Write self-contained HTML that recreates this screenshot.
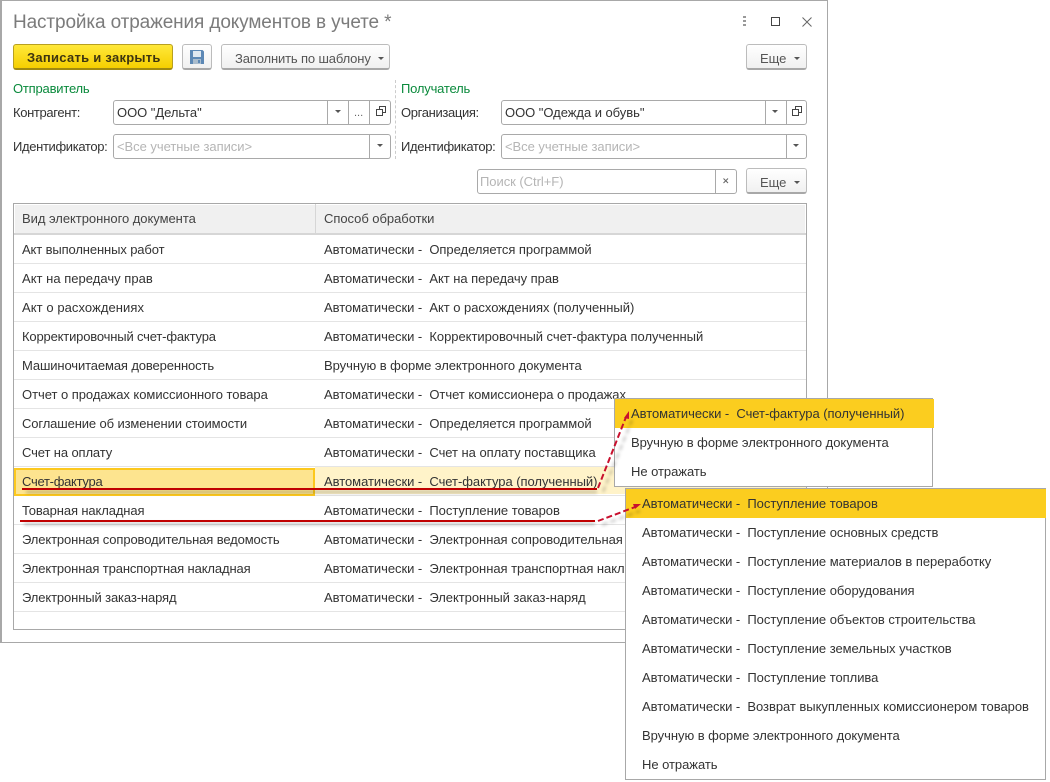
<!DOCTYPE html>
<html lang="ru"><head><meta charset="utf-8"><title>Настройка отражения документов в учете</title>
<style>
html,body{margin:0;padding:0;background:#fff}
body{width:1050px;height:782px;position:relative;overflow:hidden;font-family:"Liberation Sans",Arial,sans-serif;font-size:13px;color:#333;letter-spacing:-.04px}
.a,.t{position:absolute}
.t{white-space:pre;line-height:14px;margin-top:1px}
.win{left:0;top:0;width:825px;height:641px;border:1px solid #a8a8a8;border-left-width:2px;background:#fff}
.btn{position:absolute;box-sizing:border-box;height:26px;border:1px solid #bcbcbc;border-bottom:2px solid #a8a8a8;border-radius:3px;background:linear-gradient(#fff,#f0f0f0)}
.yb{background:linear-gradient(#ffe83a,#f5cf00);border-color:#b8a020;border-bottom-color:#a08a10}
.inp{position:absolute;box-sizing:border-box;height:25px;border:1px solid #a9a9a9;border-radius:3px;background:#fff}
.sep{position:absolute;top:0;bottom:0;width:1px;background:#a9a9a9}
.arr{position:absolute;width:0;height:0;border-left:3px solid transparent;border-right:3px solid transparent;border-top:3px solid #555}
.ph{color:#b5b5b5}
.g{color:#0a8a3c;letter-spacing:-.2px}
.l{letter-spacing:-.35px}
.c{letter-spacing:-.12px}
.hl{position:absolute;left:14px;width:792px;height:1px;background:#e4e4e4}
.pop{position:absolute;box-sizing:border-box;border:1px solid #a8a8a8;background:#fff}
.sel{position:absolute;background:#fbcd1f}
</style></head><body>
<div class="a win"></div>
<div class="t" style="left:13px;top:11px;font-size:19px;line-height:22px;color:#7b7b7b;letter-spacing:-.12px">Настройка отражения документов в учете *</div>
<svg class="a" style="left:735px;top:10px" width="85" height="24" fill="none">
<rect x="8" y="6" width="3" height="2" fill="#999"/><rect x="8" y="10" width="3" height="2" fill="#999"/><rect x="8" y="14" width="3" height="2" fill="#999"/>
<rect x="36.500" y="7.500" width="8" height="8" stroke="#444"/>
<path d="M67.500 7.500L76.500 16.500M76.500 7.500L67.500 16.500" stroke="#666"/>
</svg>

<div class="btn yb" style="left:13px;top:44px;width:160px"></div>
<div class="t" style="left:27px;top:50px;font-weight:bold;color:#3d3510;letter-spacing:.27px">Записать и закрыть</div>
<div class="btn" style="left:182px;top:44px;width:30px"></div>
<svg class="a" style="left:190px;top:50px" width="14" height="14"><path d="M0 0h12.500l1.500 1.500V14H0z" fill="#5c88b5"/><rect x="3" y="1" width="8" height="6" fill="#dfe8f0"/><rect x="3" y="9" width="8" height="5" fill="#a9bccd"/><rect x="8" y="10" width="2" height="3" fill="#5c88b5"/></svg>
<div class="btn" style="left:221px;top:44px;width:169px"></div>
<div class="t" style="left:235px;top:51px;color:#555;letter-spacing:-.14px">Заполнить по шаблону</div>
<div class="arr" style="left:378px;top:57px"></div>
<div class="btn" style="left:746px;top:44px;width:61px"></div>
<div class="t" style="left:760px;top:51px;color:#555">Еще</div>
<div class="arr" style="left:794px;top:57px"></div>

<div class="t g" style="left:13px;top:81px">Отправитель</div>
<div class="t g" style="left:401px;top:81px">Получатель</div>
<div class="a" style="left:395px;top:80px;height:79px;border-left:1px dashed #ccc"></div>

<div class="t l" style="left:13px;top:105px">Контрагент:</div>
<div class="inp" style="left:113px;top:100px;width:278px"><div class="sep" style="left:213px"></div><div class="sep" style="left:234px"></div><div class="sep" style="left:255px"></div></div>
<div class="t" style="left:117px;top:105px">ООО "Дельта"</div>
<div class="arr" style="left:335px;top:110px"></div>
<div class="t" style="left:354px;top:105px;color:#666;letter-spacing:0;font-size:11px">...</div>
<svg class="a" style="left:375px;top:106px" width="12" height="12" fill="none" stroke="#444"><path d="M3.500 3.500V.5h6v6H7M.5 3.500h6v6h-6z" transform="translate(1 0)"/></svg>

<div class="t l" style="left:13px;top:139px">Идентификатор:</div>
<div class="inp" style="left:113px;top:134px;width:278px"><div class="sep" style="left:255px"></div></div>
<div class="t ph" style="left:117px;top:139px">&lt;Все учетные записи&gt;</div>
<div class="arr" style="left:377px;top:144px"></div>

<div class="t l" style="left:401px;top:105px">Организация:</div>
<div class="inp" style="left:501px;top:100px;width:306px"><div class="sep" style="left:263px"></div><div class="sep" style="left:284px"></div></div>
<div class="t" style="left:505px;top:105px">ООО "Одежда и обувь"</div>
<div class="arr" style="left:772px;top:110px"></div>
<svg class="a" style="left:791px;top:106px" width="12" height="12" fill="none" stroke="#444"><path d="M3.500 3.500V.5h6v6H7M.5 3.500h6v6h-6z" transform="translate(1 0)"/></svg>

<div class="t l" style="left:401px;top:139px">Идентификатор:</div>
<div class="inp" style="left:501px;top:134px;width:306px"><div class="sep" style="left:284px"></div></div>
<div class="t ph" style="left:505px;top:139px">&lt;Все учетные записи&gt;</div>
<div class="arr" style="left:793px;top:144px"></div>

<div class="inp" style="left:477px;top:169px;width:260px"><div class="sep" style="left:237px"></div></div>
<div class="t ph" style="left:480px;top:174px">Поиск (Ctrl+F)</div>
<svg class="a" style="left:722px;top:177px" width="8" height="8"><path d="M1.500 1.500L6 6M6 1.500L1.500 6" stroke="#666" fill="none"/></svg>
<div class="btn" style="left:746px;top:168px;width:61px"></div>
<div class="t" style="left:760px;top:175px;color:#555">Еще</div>
<div class="arr" style="left:794px;top:181px"></div>

<div class="a" style="left:13px;top:203px;width:792px;height:425px;border:1px solid #a8a8a8;background:#fff"></div>
<div class="a" style="left:15px;top:205px;width:790px;height:28px;background:#f0f0f0"></div>
<div class="a" style="left:315px;top:204px;width:1px;height:30px;background:#d6d6d6"></div>
<div class="a" style="left:14px;top:233px;width:792px;height:2px;background:#d6d6d6"></div>
<div class="t" style="left:22px;top:211px;color:#444">Вид электронного документа</div>
<div class="t" style="left:324px;top:211px;color:#444">Способ обработки</div>

<div class="hl" style="top:263px"></div><div class="hl" style="top:292px"></div><div class="hl" style="top:321px"></div><div class="hl" style="top:350px"></div><div class="hl" style="top:379px"></div><div class="hl" style="top:408px"></div><div class="hl" style="top:437px"></div><div class="hl" style="top:466px"></div><div class="hl" style="top:495px"></div><div class="hl" style="top:524px"></div><div class="hl" style="top:553px"></div><div class="hl" style="top:582px"></div><div class="hl" style="top:611px"></div>

<div class="a" style="left:315px;top:467px;width:491px;height:27px;background:#fff3c9"></div>
<div class="a" style="left:14px;top:468px;width:297px;height:24px;background:#fde48f;border:2px solid #fcc81e"></div>

<div class="t c" style="left:22px;top:242px">Акт выполненных работ</div><div class="t" style="left:324px;top:242px">Автоматически -  Определяется программой</div>
<div class="t" style="left:22px;top:271px;letter-spacing:.02px">Акт на передачу прав</div><div class="t" style="left:324px;top:271px">Автоматически -  Акт на передачу прав</div>
<div class="t" style="left:22px;top:300px;letter-spacing:.07px">Акт о расхождениях</div><div class="t" style="left:324px;top:300px">Автоматически -  Акт о расхождениях (полученный)</div>
<div class="t c" style="left:22px;top:329px;letter-spacing:-.17px">Корректировочный счет-фактура</div><div class="t" style="left:324px;top:329px">Автоматически -  Корректировочный счет-фактура полученный</div>
<div class="t c" style="left:22px;top:358px">Машиночитаемая доверенность</div><div class="t" style="left:324px;top:358px">Вручную в форме электронного документа</div>
<div class="t" style="left:22px;top:387px">Отчет о продажах комиссионного товара</div><div class="t" style="left:324px;top:387px">Автоматически -  Отчет комиссионера о продажах</div>
<div class="t c" style="left:22px;top:416px">Соглашение об изменении стоимости</div><div class="t" style="left:324px;top:416px">Автоматически -  Определяется программой</div>
<div class="t c" style="left:22px;top:445px">Счет на оплату</div><div class="t" style="left:324px;top:445px">Автоматически -  Счет на оплату поставщика</div>
<div class="t c" style="left:22px;top:474px;letter-spacing:-.28px">Счет-фактура</div><div class="t" style="left:324px;top:474px">Автоматически -  Счет-фактура (полученный)</div>
<div class="t c" style="left:22px;top:503px">Товарная накладная</div><div class="t" style="left:324px;top:503px">Автоматически -  Поступление товаров</div>
<div class="t c" style="left:22px;top:532px">Электронная сопроводительная ведомость</div><div class="t" style="left:324px;top:532px">Автоматически -  Электронная сопроводительная ведомость</div>
<div class="t c" style="left:22px;top:561px">Электронная транспортная накладная</div><div class="t" style="left:324px;top:561px">Автоматически -  Электронная транспортная накладная</div>
<div class="t c" style="left:22px;top:590px">Электронный заказ-наряд</div><div class="t" style="left:324px;top:590px">Автоматически -  Электронный заказ-наряд</div>

<svg class="a" style="left:0;top:0" width="1050" height="782" fill="none">
<defs><filter id="b" x="-10%" y="-200%" width="120%" height="500%"><feGaussianBlur stdDeviation="1.500"/></filter></defs>
<path d="M26 492H597M24 524H595" stroke="#000" stroke-opacity=".3" stroke-width="2" filter="url(#b)"/>
<path d="M22 489H597M20 521H595" stroke="#c00000" stroke-width="2"/>
</svg>

<div class="pop" style="left:614px;top:398px;width:319px;height:89px"></div>
<div class="sel" style="left:615px;top:399px;width:319px;height:29px"></div>
<div class="t" style="left:631px;top:406px">Автоматически -  Счет-фактура (полученный)</div>
<div class="t" style="left:631px;top:435px">Вручную в форме электронного документа</div>
<div class="t" style="left:631px;top:464px">Не отражать</div>

<div class="pop" style="left:625px;top:488px;width:421px;height:292px"></div>
<div class="sel" style="left:626px;top:489px;width:420px;height:29px"></div>
<div class="t" style="left:642px;top:496px">Автоматически -  Поступление товаров</div>
<div class="t" style="left:642px;top:525px">Автоматически -  Поступление основных средств</div>
<div class="t" style="left:642px;top:554px">Автоматически -  Поступление материалов в переработку</div>
<div class="t" style="left:642px;top:583px">Автоматически -  Поступление оборудования</div>
<div class="t" style="left:642px;top:612px">Автоматически -  Поступление объектов строительства</div>
<div class="t" style="left:642px;top:641px">Автоматически -  Поступление земельных участков</div>
<div class="t" style="left:642px;top:670px">Автоматически -  Поступление топлива</div>
<div class="t" style="left:642px;top:699px">Автоматически -  Возврат выкупленных комиссионером товаров</div>
<div class="t" style="left:642px;top:728px">Вручную в форме электронного документа</div>
<div class="t" style="left:642px;top:757px">Не отражать</div>

<svg class="a" style="left:0;top:0" width="1050" height="782" fill="none">
<defs><filter id="c" x="-50%" y="-50%" width="200%" height="200%"><feGaussianBlur stdDeviation="1.500"/></filter></defs>
<path d="M603 492L632 420M602 525L640 511" stroke="#000" stroke-opacity=".25" stroke-width="2" stroke-dasharray="6 3" filter="url(#c)"/>
<path d="M598 488L626 417M598 521L635 507" stroke="#c8102e" stroke-width="2" stroke-dasharray="6 3"/>
<path d="M629 411L624 418L629 419Z" fill="#c8102e"/>
<path d="M641 504L633 504L635 509Z" fill="#c8102e"/>
</svg>
</body></html>
